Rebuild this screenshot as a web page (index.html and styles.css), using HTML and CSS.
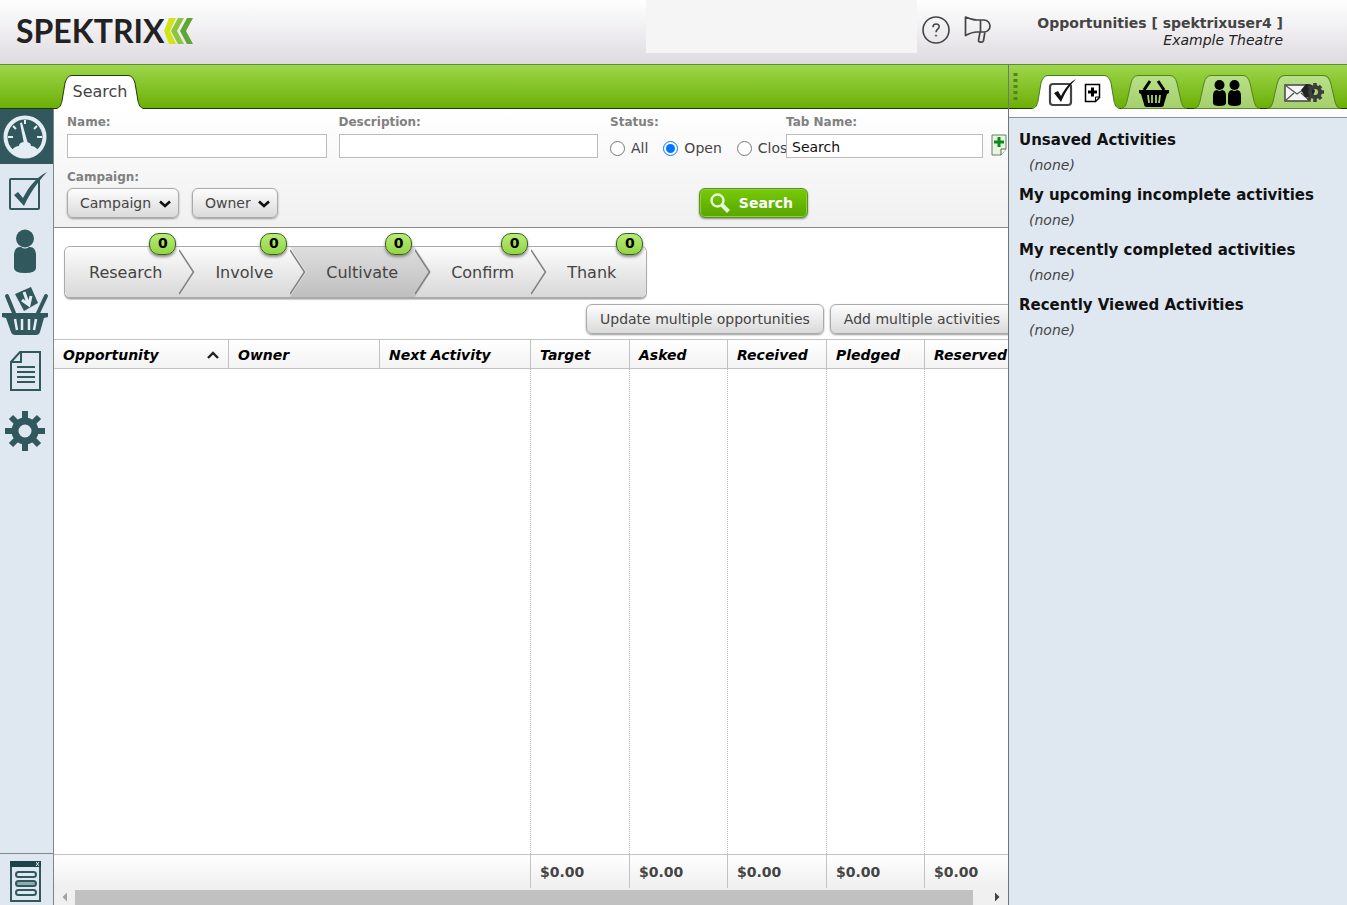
FILE: index.html
```html
<!DOCTYPE html>
<html lang="en">
<head>
<meta charset="utf-8">
<title>Opportunities</title>
<link rel="stylesheet" href="styles.css">
</head>
<body>
<svg class="defs" aria-hidden="true">
  <defs>
    <linearGradient id="stageFill" x1="0" y1="0" x2="0" y2="1"><stop offset="0" stop-color="#fcfcfc"/><stop offset="1" stop-color="#d8d8d8"/></linearGradient>
    <linearGradient id="stageFillOn" x1="0" y1="0" x2="0" y2="1"><stop offset="0" stop-color="#dedede"/><stop offset="1" stop-color="#bfbfbf"/></linearGradient>
    <linearGradient id="tabFill" x1="0" y1="0" x2="0" y2="1"><stop offset="0" stop-color="#b9e088"/><stop offset="1" stop-color="#a3d06c"/></linearGradient>
  </defs>
</svg>

<header class="top">
  <a class="logo" href="#" aria-label="Spektrix">
    <span class="logo-word">SPEKTRIX</span>
    <svg class="logo-mark" width="30" height="26" viewBox="0 0 30 26">
      <path d="M5 0h7L6 13l6 13H5L0 13z" fill="#d3e414"/>
      <path d="M14 0h6l-7 13 7 13h-6L7 13z" fill="#8cc63f"/>
      <path d="M23 0h6l-7 13 7 13h-6l-7-13z" fill="#5fa637"/>
    </svg>
  </a>
  <div class="notice"></div>
  <div class="top-icons">
    <button class="plain" aria-label="Help"><svg width="28" height="28" viewBox="0 0 28 28" fill="none" stroke="#444" stroke-width="1.600"><circle cx="14" cy="14" r="13"/><path d="M11 11.200c0-4.300 6.400-4 6.200-.5-.2 2.500-3.200 2.500-3.200 5.600"/><circle cx="14" cy="19.600" r=".7" fill="#444" stroke-width=".8"/></svg></button>
    <button class="plain" aria-label="Announcements"><svg width="28" height="28" viewBox="0 0 28 28" fill="none" stroke="#444" stroke-width="1.700" stroke-linejoin="round"><path d="M1.500 1Q8 4 13 4h7a6 6 0 0 1 0 12h-7Q8 16 1.500 19.500zM16.500 4v12M16 16l-1.500 8.500c0 2 4.500 2.500 5 0l1.500-9"/></svg></button>
  </div>
  <div class="account">
    <div class="account-name">Opportunities [ spektrixuser4 ]</div>
    <div class="account-org">Example Theatre</div>
  </div>
</header>

<div class="workspace">
  <div class="left">
    <div class="bar tabs-main">
      <button class="tab tab-search">
        <svg class="tab-shape" viewBox="0 0 88 34" preserveAspectRatio="none"><path d="M0 34V33.500C4 33 5 30 6 26L9 8Q11 .5 16 .5H72Q77 .5 79 8L82 26C83 30 84 33 88 33.500V34z" fill="#fff"/><path d="M0 33.500C4 33 5 30 6 26L9 8Q11 .5 16 .5H72Q77 .5 79 8L82 26C83 30 84 33 88 33.500" fill="none" stroke="#1d3a06"/></svg>
        <span class="tab-text">Search</span>
      </button>
    </div>
    <div class="left-body">
      <nav class="rail">
        <a class="rail-item rail-on" href="#" aria-label="Dashboard"><svg width="44" height="44" viewBox="0 0 44 44"><circle cx="22" cy="22" r="19.500" fill="#31585c" stroke="#e4edf5" stroke-width="4"/><path d="M9 35q3-4 7-4 0-4 6-4t6 4q4 0 7 4a19 19 0 0 1-26 0z" fill="#e4edf5"/><path d="M17 8l2-.5L25 29h-4z" fill="#e4edf5"/><path d="M5 22h5M34 22h5M10 11l3 3M34 11l-3 3M22 5v4" stroke="#e4edf5" stroke-width="2"/></svg></a>
        <a class="rail-item" href="#" aria-label="Activities"><svg width="44" height="44" viewBox="0 0 44 44"><rect x="7" y="10" width="29" height="30" rx="1" fill="none" stroke="#31585c" stroke-width="2"/><path d="M11 26l4-3 5 6C26 17 34 8 44 3 34 14 27 24 21 37z" fill="#31585c"/></svg></a>
        <a class="rail-item" href="#" aria-label="Customers"><svg width="44" height="44" viewBox="0 0 44 44"><circle cx="22" cy="9.500" r="9" fill="#31585c"/><path d="M11 25q1-8 7-7 4 3 8 0 6-1 7 7v14q0 5-11 5t-11-5z" fill="#31585c"/></svg></a>
        <a class="rail-item" href="#" aria-label="Sales"><svg width="48" height="50" viewBox="0 0 48 50"><path d="M14 8l16-7 7 16-14 8z" fill="#31585c"/><path d="M23 6l4 11M21 14l7 5 2-9" stroke="#e4edf5" stroke-width="3" fill="none"/><path d="M6 10l7 17M45 10l-8 17" stroke="#31585c" stroke-width="4" stroke-linecap="round"/><path d="M1 27h46v4l-4 1-4 14q-1 3-4 3H14q-3 0-4-3L5 32l-4-1z" fill="#31585c"/><path d="M14 33l2 11M21 33v11M28 33v11M35 33l-2 11" stroke="#e4edf5" stroke-width="2.500"/></svg></a>
        <a class="rail-item" href="#" aria-label="Reports"><svg width="44" height="44" viewBox="0 0 44 44" fill="none" stroke="#31585c" stroke-width="2"><path d="M17 3h20v38H8V13zM18 3v10H8"/><path d="M14 18h18M14 23h18M14 28h18M14 33h18"/></svg></a>
        <a class="rail-item" href="#" aria-label="Settings"><svg width="44" height="44" viewBox="0 0 44 44"><g stroke="#31585c" fill="none"><circle cx="22" cy="22" r="10" stroke-width="7"/><path d="M22 2v7M22 35v7M2 22h7M35 22h7M8 8l5 5M31 31l5 5M36 8l-5 5M13 31l-5 5" stroke-width="6"/></g></svg></a>
        <a class="rail-item rail-last" href="#" aria-label="Windows"><svg width="44" height="44" viewBox="0 0 44 44"><path d="M8 3h29v39H8z" fill="none" stroke="#31585c" stroke-width="2"/><path d="M7 2h31v6H7z" fill="#1c4448"/><path d="M33 3l3 4M36 3l-3 4" stroke="#e4edf5"/><g fill="none" stroke="#31585c" stroke-width="2"><rect x="13" y="13" width="20" height="5" rx="2.500"/><rect x="13" y="22" width="20" height="5" rx="2.500" fill="#8eacae"/><rect x="13" y="31" width="20" height="5" rx="2.500"/></g></svg></a>
      </nav>

      <main class="content">
        <form class="filters">
          <div class="filter-row">
            <div class="field"><label for="name">Name:</label><input class="box" id="name" type="text"></div>
            <div class="field"><label for="desc">Description:</label><input class="box" id="desc" type="text"></div>
            <fieldset class="field status"><legend>Status:</legend>
              <div class="radios">
                <label><input type="radio" name="status">All</label>
                <label><input type="radio" name="status" checked>Open</label>
                <label><input type="radio" name="status">Closed</label>
              </div>
            </fieldset>
            <div class="field tab-field"><label for="tabname">Tab Name:</label><input class="box" id="tabname" type="text" value="Search"></div>
            <button class="plain add-tab" type="button" aria-label="Add tab"><svg width="16" height="22" viewBox="0 0 16 22"><path d="M1 1h14v14l-5 6H1z" fill="#e9f5e4" stroke="#6b7f66"/><path d="M10 21v-6h5" fill="#fff" stroke="#4d7040"/><path d="M8 3v10M3 8h10" stroke="#0c8a1c" stroke-width="3"/></svg></button>
          </div>
          <label class="campaign-label" for="campaign">Campaign:</label>
          <div class="filter-actions">
            <span class="drop"><select id="campaign"><option>Campaign</option></select><svg class="drop-arrow" width="12" height="8" viewBox="0 0 12 8"><path d="M1 1.500L6 6l5-4.500" fill="none" stroke="#111" stroke-width="2.600"/></svg></span>
            <span class="drop"><select aria-label="Owner"><option>Owner</option></select><svg class="drop-arrow" width="12" height="8" viewBox="0 0 12 8"><path d="M1 1.500L6 6l5-4.500" fill="none" stroke="#111" stroke-width="2.600"/></svg></span>
            <button class="go" type="button"><svg width="22" height="22" viewBox="0 0 22 22" fill="none" stroke="#e9f9d8"><circle cx="8.500" cy="8.500" r="6" stroke-width="2.400"/><path d="M13 13l6.500 6.500" stroke-width="4"/></svg>Search</button>
          </div>
        </form>

        <div class="stages">
          <button class="stage">Research<b class="badge">0</b><svg class="chev" viewBox="0 0 16 50"><path d="M0 0L16 25 0 50z" fill="url(#stageFill)"/><path d="M0 3L14.500 25 0 47" fill="none" stroke="#808080" stroke-width="1.500"/></svg></button>
          <button class="stage">Involve<b class="badge">0</b><svg class="chev" viewBox="0 0 16 50"><path d="M0 0L16 25 0 50z" fill="url(#stageFill)"/><path d="M0 3L14.500 25 0 47" fill="none" stroke="#808080" stroke-width="1.500"/></svg></button>
          <button class="stage stage-on">Cultivate<b class="badge">0</b><svg class="chev" viewBox="0 0 16 50"><path d="M0 0L16 25 0 50z" fill="url(#stageFillOn)"/><path d="M0 3L14.500 25 0 47" fill="none" stroke="#808080" stroke-width="1.500"/></svg></button>
          <button class="stage">Confirm<b class="badge">0</b><svg class="chev" viewBox="0 0 16 50"><path d="M0 0L16 25 0 50z" fill="url(#stageFill)"/><path d="M0 3L14.500 25 0 47" fill="none" stroke="#808080" stroke-width="1.500"/></svg></button>
          <button class="stage">Thank<b class="badge">0</b></button>
        </div>

        <div class="bulk">
          <button class="soft">Update multiple opportunities</button>
          <button class="soft">Add multiple activities</button>
        </div>

        <div class="grid-wrap">
          <table class="grid">
            <colgroup><col class="c-opp"><col class="c-mid"><col class="c-mid"><col class="c-num"><col class="c-num"><col class="c-num"><col class="c-num"><col class="c-num"></colgroup>
            <thead><tr>
              <th><span class="sorted">Opportunity<svg width="12" height="8" viewBox="0 0 12 8"><path d="M1 7L6 2l5 5" fill="none" stroke="#222" stroke-width="2.400"/></svg></span></th>
              <th>Owner</th><th>Next Activity</th><th>Target</th><th>Asked</th><th>Received</th><th>Pledged</th><th>Reserved</th>
            </tr></thead>
            <tbody><tr><td></td><td></td><td></td><td></td><td></td><td></td><td></td><td></td></tr></tbody>
            <tfoot><tr><td></td><td></td><td></td><td>$0.00</td><td>$0.00</td><td>$0.00</td><td>$0.00</td><td>$0.00</td></tr></tfoot>
          </table>
        </div>
        <div class="hscroll">
          <svg width="21" height="17" viewBox="0 0 21 17"><path d="M13 4.500v9L8.500 9z" fill="#a3a3a3"/></svg>
          <div class="thumb"></div>
          <svg width="35" height="17" viewBox="0 0 35 17"><path d="M22 4.500v9L26.500 9z" fill="#444"/></svg>
        </div>
      </main>
    </div>
  </div>

  <aside class="right">
    <div class="bar tabs-side">
      <svg class="grip" width="5" height="28" viewBox="0 0 5 28"><path d="M2.500 0v28" stroke="#55832a" stroke-width="4" stroke-dasharray="3 3"/></svg>
      <button class="tab side-tab side-on" aria-label="Activities">
        <svg class="tab-shape" viewBox="0 0 88 34" preserveAspectRatio="none"><path d="M0 34V33.500C4 33 5 30 6 26L9 8Q11 .5 16 .5H72Q77 .5 79 8L82 26C83 30 84 33 88 33.500V34z" fill="#fff"/><path d="M0 33.500C4 33 5 30 6 26L9 8Q11 .5 16 .5H72Q77 .5 79 8L82 26C83 30 84 33 88 33.500" fill="none" stroke="#4a7a1c"/></svg>
        <svg class="tab-icon" width="56" height="28" viewBox="0 0 56 28"><rect x="2" y="5" width="21" height="21" rx="3" fill="#fff" stroke="#444" stroke-width="2.200"/><path d="M6 14l4-2 3 5C17 9 22 3 28 0 21 7 17 14 13 23z" fill="#111"/><path d="M37.500 5.500h14v13l-4 4h-10z" fill="#fff" stroke="#000" stroke-width="1.500"/><path d="M47.500 22v-4H51" fill="none" stroke="#000"/><path d="M44.500 8.500v9M40 13h9" stroke="#000" stroke-width="3"/></svg>
      </button>
      <button class="tab side-tab" aria-label="Basket">
        <svg class="tab-shape" viewBox="0 0 66 34" preserveAspectRatio="none"><path d="M0 33.500C4 33 5 30 6 26L10 8Q12 .5 17 .5H49Q54 .5 56 8L60 26C61 30 62 33 66 33.500" fill="url(#tabFill)" stroke="#4f8420"/></svg>
        <svg class="tab-icon" width="30" height="28" viewBox="0 0 30 28"><path d="M0 11h30v3l-2 1-3 10q0 3-3 3H8q-3 0-3-3L2 15l-2-1z"/><path d="M5 11L11 2M25 11L19 2" stroke="#000" stroke-width="3"/><path d="M9 16l1 8M13 16v8M17 16v8M21 16l-1 8" stroke="#a5d36e" stroke-width="1.800"/></svg>
      </button>
      <button class="tab side-tab" aria-label="Customers">
        <svg class="tab-shape" viewBox="0 0 66 34" preserveAspectRatio="none"><path d="M0 33.500C4 33 5 30 6 26L10 8Q12 .5 17 .5H49Q54 .5 56 8L60 26C61 30 62 33 66 33.500" fill="url(#tabFill)" stroke="#4f8420"/></svg>
        <svg class="tab-icon" width="30" height="28" viewBox="0 0 30 28"><circle cx="7.500" cy="6" r="5"/><circle cx="22.500" cy="6" r="5"/><path d="M1 17q0-6 4-6 2.500 2 5 0 4 0 4 6v7q0 3-6.500 3T1 24zM16 17q0-6 4-6 2.500 2 5 0 4 0 4 6v7q0 3-6.500 3T16 24z"/></svg>
      </button>
      <button class="tab side-tab side-wide" aria-label="Mail settings">
        <svg class="tab-shape" viewBox="0 0 72 34" preserveAspectRatio="none"><path d="M0 33.500C4 33 5 30 6 26L10 8Q12 .5 17 .5H55Q60 .5 62 8L66 26C67 30 68 33 72 33.500" fill="url(#tabFill)" stroke="#4f8420"/></svg>
        <svg class="tab-icon" width="40" height="26" viewBox="0 0 40 26"><path d="M1 5h25v16H1z" fill="#f5f5f5" stroke="#444" stroke-width="1.500"/><path d="M1 5l12 9L26 5M1 21l9-8M26 21l-9-8" fill="none" stroke="#555" stroke-width="1.300"/><path d="M17 10l5-6 6 1 3 6-3 7-7-1z" fill="#222"/><circle cx="31" cy="12" r="5" fill="none" stroke="#3d3d3d" stroke-width="4"/><path d="M31 3v4M31 17v5M36 12h4M25 6l3 3M34 15l3 4M37 6l-3 3M28 15l-4 5" stroke="#3d3d3d" stroke-width="3.500"/></svg>
      </button>
    </div>
    <div class="side-strip"></div>
    <div class="side-body">
      <h2>Unsaved Activities</h2><p>(none)</p>
      <h2>My upcoming incomplete activities</h2><p>(none)</p>
      <h2>My recently completed activities</h2><p>(none)</p>
      <h2>Recently Viewed Activities</h2><p>(none)</p>
    </div>
  </aside>
</div>
</body>
</html>
```
FILE: styles.css
```css
* { box-sizing: border-box; }
html, body { height: 100%; margin: 0; }
body {
  display: flex;
  flex-direction: column;
  overflow: hidden;
  font-family: Verdana, "DejaVu Sans", sans-serif;
  font-size: 14px;
  color: #444;
  background: #fff;
}
button, input, select { font: inherit; color: inherit; }
svg { display: block; flex: none; }
.defs { position: absolute; width: 0; height: 0; }
.plain { padding: 0; border: 0; background: none; }

/* header */
.top {
  flex: none;
  display: flex;
  height: 64px;
  padding: 0 64px 0 16px;
  background: linear-gradient(#fff, #dedbe0);
}
.logo { display: flex; align-items: center; height: 62px; color: #222; text-decoration: none; }
.logo-word { font: bold 32px/40px Lato, sans-serif; }
.notice { width: 271px; height: 53px; margin-left: auto; background: #f5f5f5; }
.top-icons { display: flex; gap: 14px; padding: 16px 0 0 5px; align-items: flex-start; }
.account { width: 291px; padding-top: 15px; text-align: right; line-height: 17px; white-space: nowrap; }
.account-name { font-weight: bold; }
.account-org { font-style: italic; color: #222; }

/* frame */
.workspace { flex: 1; display: flex; min-height: 0; }
.left { flex: 1; min-width: 0; display: flex; flex-direction: column; }
.right { flex: none; width: 339px; display: flex; flex-direction: column; border-left: 1px solid #6d7679; }
.bar {
  flex: none;
  display: flex;
  align-items: flex-end;
  height: 45px;
  border-top: 1px solid #5c8c34;
  background: linear-gradient(#9dd64b, #6bae05);
  box-shadow: inset 0 -1px #1d3a06;
}
.tabs-main { padding-left: 56px; }
.tab { position: relative; height: 34px; padding: 0; border: 0; background: none; }
.tab-shape { position: absolute; inset: 0; width: 100%; height: 100%; }
.tab-text { position: relative; font-size: 16px; }
.tab-search { width: 88px; padding-bottom: 2px; }
.left-body { flex: 1; display: flex; min-height: 0; }

/* left rail */
.rail {
  flex: none;
  width: 54px;
  display: flex;
  flex-direction: column;
  background: #dfe8f1;
  border-right: 1px solid #7e8689;
}
.rail-item { display: flex; align-items: center; justify-content: center; height: 60px; padding-right: 3px; }
.rail-on { height: 55px; margin-bottom: -3px; background: #31585c; }
.rail-last { height: 52px; margin-top: auto; padding-top: 2px; border-top: 1px solid #7e8689; }

/* filters */
.content { flex: 1; min-width: 0; display: flex; flex-direction: column; overflow: hidden; }
.filters {
  flex: none;
  height: 119px;
  padding: 5px 0 0 13px;
  border-bottom: 1px solid #8c8c8c;
  background: linear-gradient(#fff, #f0f0f0);
}
.filter-row { display: grid; grid-template-columns: 1fr 1fr 176px 197px 25px; }
.field { min-width: 0; margin: 0; padding: 0 12px 0 0; border: 0; }
.field > label, .field legend, .campaign-label {
  display: block;
  padding: 0;
  font-size: 12px;
  line-height: 16px;
  font-weight: bold;
  color: #808080;
}
.box {
  display: block;
  width: 100%;
  height: 24px;
  margin-top: 4px;
  padding: 1px 5px 0;
  border: 1px solid #bbb;
  background: #fff;
  color: #111;
}
.status { padding: 0; overflow: hidden; }
.radios { display: flex; gap: 15px; padding-top: 9px; white-space: nowrap; }
.radios label { display: flex; align-items: center; gap: 6px; line-height: 18px; }
.radios input { flex: none; width: 15px; height: 15px; margin: 0; }
.tab-field { padding: 0; }
.add-tab { align-self: end; padding: 0 0 2px 8px; }
.campaign-label { margin-top: 11px; }
.filter-actions { display: flex; gap: 13px; margin-top: 3px; }
.drop { position: relative; display: inline-flex; }
.drop select, .soft {
  height: 30px;
  border: 1px solid #aaa;
  border-radius: 6px;
  background: linear-gradient(#fdfdfd, #dadada);
  box-shadow: 0 1px 2px #999;
  white-space: nowrap;
}
.drop select { appearance: none; padding: 0 26px 0 12px; }
.drop-arrow { position: absolute; right: 8px; top: 12px; pointer-events: none; }
.go {
  display: flex;
  align-items: center;
  gap: 8px;
  height: 30px;
  margin-left: auto;
  margin-right: 200px;
  padding: 0 14px 0 9px;
  border: 1px solid #5a9418;
  border-radius: 6px;
  background: linear-gradient(#78ca08, #58a500);
  box-shadow: inset 0 0 0 1px #8fd040, 0 1px 2px #888;
  color: #fff;
  font-weight: bold;
}

/* stages */
.stages { flex: none; display: flex; align-self: flex-start; height: 53px; margin: 18px 0 0 10px; border: 1px solid #aaa; border-bottom-width: 2px; border-radius: 6px; box-shadow: 0 1px 1px #ccc; }
.stage {
  position: relative;
  padding: 0 17px 0 36px;
  border: 0;
  background: linear-gradient(#fcfcfc, #d8d8d8);
  font-size: 16px;
}
.stage:first-child { padding-left: 24px; border-radius: 5px 0 0 5px; }
.stage:last-child { padding-right: 30px; border-radius: 0 5px 5px 0; }
.stage-on { background: linear-gradient(#dedede, #bfbfbf); }
.chev { position: absolute; left: 100%; top: 0; z-index: 1; width: 16px; height: 100%; }
.badge {
  position: absolute;
  z-index: 2;
  top: -14px;
  right: 3px;
  width: 27px;
  height: 22px;
  border: 1px solid #35611a;
  border-radius: 10px;
  background: linear-gradient(#b8ea78, #94d443);
  box-shadow: 0 2px 3px #888;
  color: #000;
  font-size: 14px;
  line-height: 19px;
  text-align: center;
}
.bulk { flex: none; display: flex; gap: 6px; margin: 5px 0 5px 532px; }
.soft { flex: none; padding: 0 13px; }

/* results */
.grid-wrap { flex: 1; min-height: 0; overflow: hidden; }
.grid { width: 970px; height: 100%; table-layout: fixed; border-collapse: separate; border-spacing: 0; }
.c-opp { width: 175px; }
.c-mid { width: 151px; }
.c-num { width: 99px; }
.c-num:nth-child(odd) { width: 98px; }
.grid th {
  height: 30px;
  padding: 2px 9px 0;
  border: solid #c2c2c2;
  border-width: 1px 1px 1px 0;
  background: linear-gradient(#fff, #f3f3f3);
  color: #000;
  font-style: italic;
  text-align: left;
}
.sorted { display: flex; justify-content: space-between; align-items: center; }
.grid tbody td { padding: 0; }
.grid tbody td:nth-child(n+3) { border-right: 1px dotted #bbb; }
.grid tfoot td {
  height: 34px;
  padding: 0 9px;
  border-top: 1px solid #c2c2c2;
  background: linear-gradient(#fff, #efefef);
  font-weight: bold;
}
.grid tfoot td:nth-child(n+3) { border-right: 1px solid #c2c2c2; }
.hscroll { flex: none; display: flex; height: 17px; background: #f0f0f0; }
.thumb { flex: 1; margin-top: 2px; background: #c1c1c1; }

/* side panel */
.tabs-side { padding-left: 4px; }
.grip { align-self: center; margin-right: 14px; }
.side-tab { display: flex; justify-content: center; align-items: center; width: 66px; margin-left: 7px; padding-top: 2px; }
.side-on { width: 88px; margin: 0 -6px 0 0; }
.side-wide { width: 74px; }
.tab-icon { position: relative; }
.side-strip { flex: none; height: 9px; border-bottom: 1px solid #8a9298; background: #fdfdfd; }
.side-body { flex: 1; padding: 12px 10px; background: #dfe8f1; }
.side-body h2 { margin: 0; font-size: 15px; line-height: 20px; color: #111; white-space: nowrap; }
.side-body p { margin: 5px 0 10px 10px; line-height: 20px; font-style: italic; }
```
